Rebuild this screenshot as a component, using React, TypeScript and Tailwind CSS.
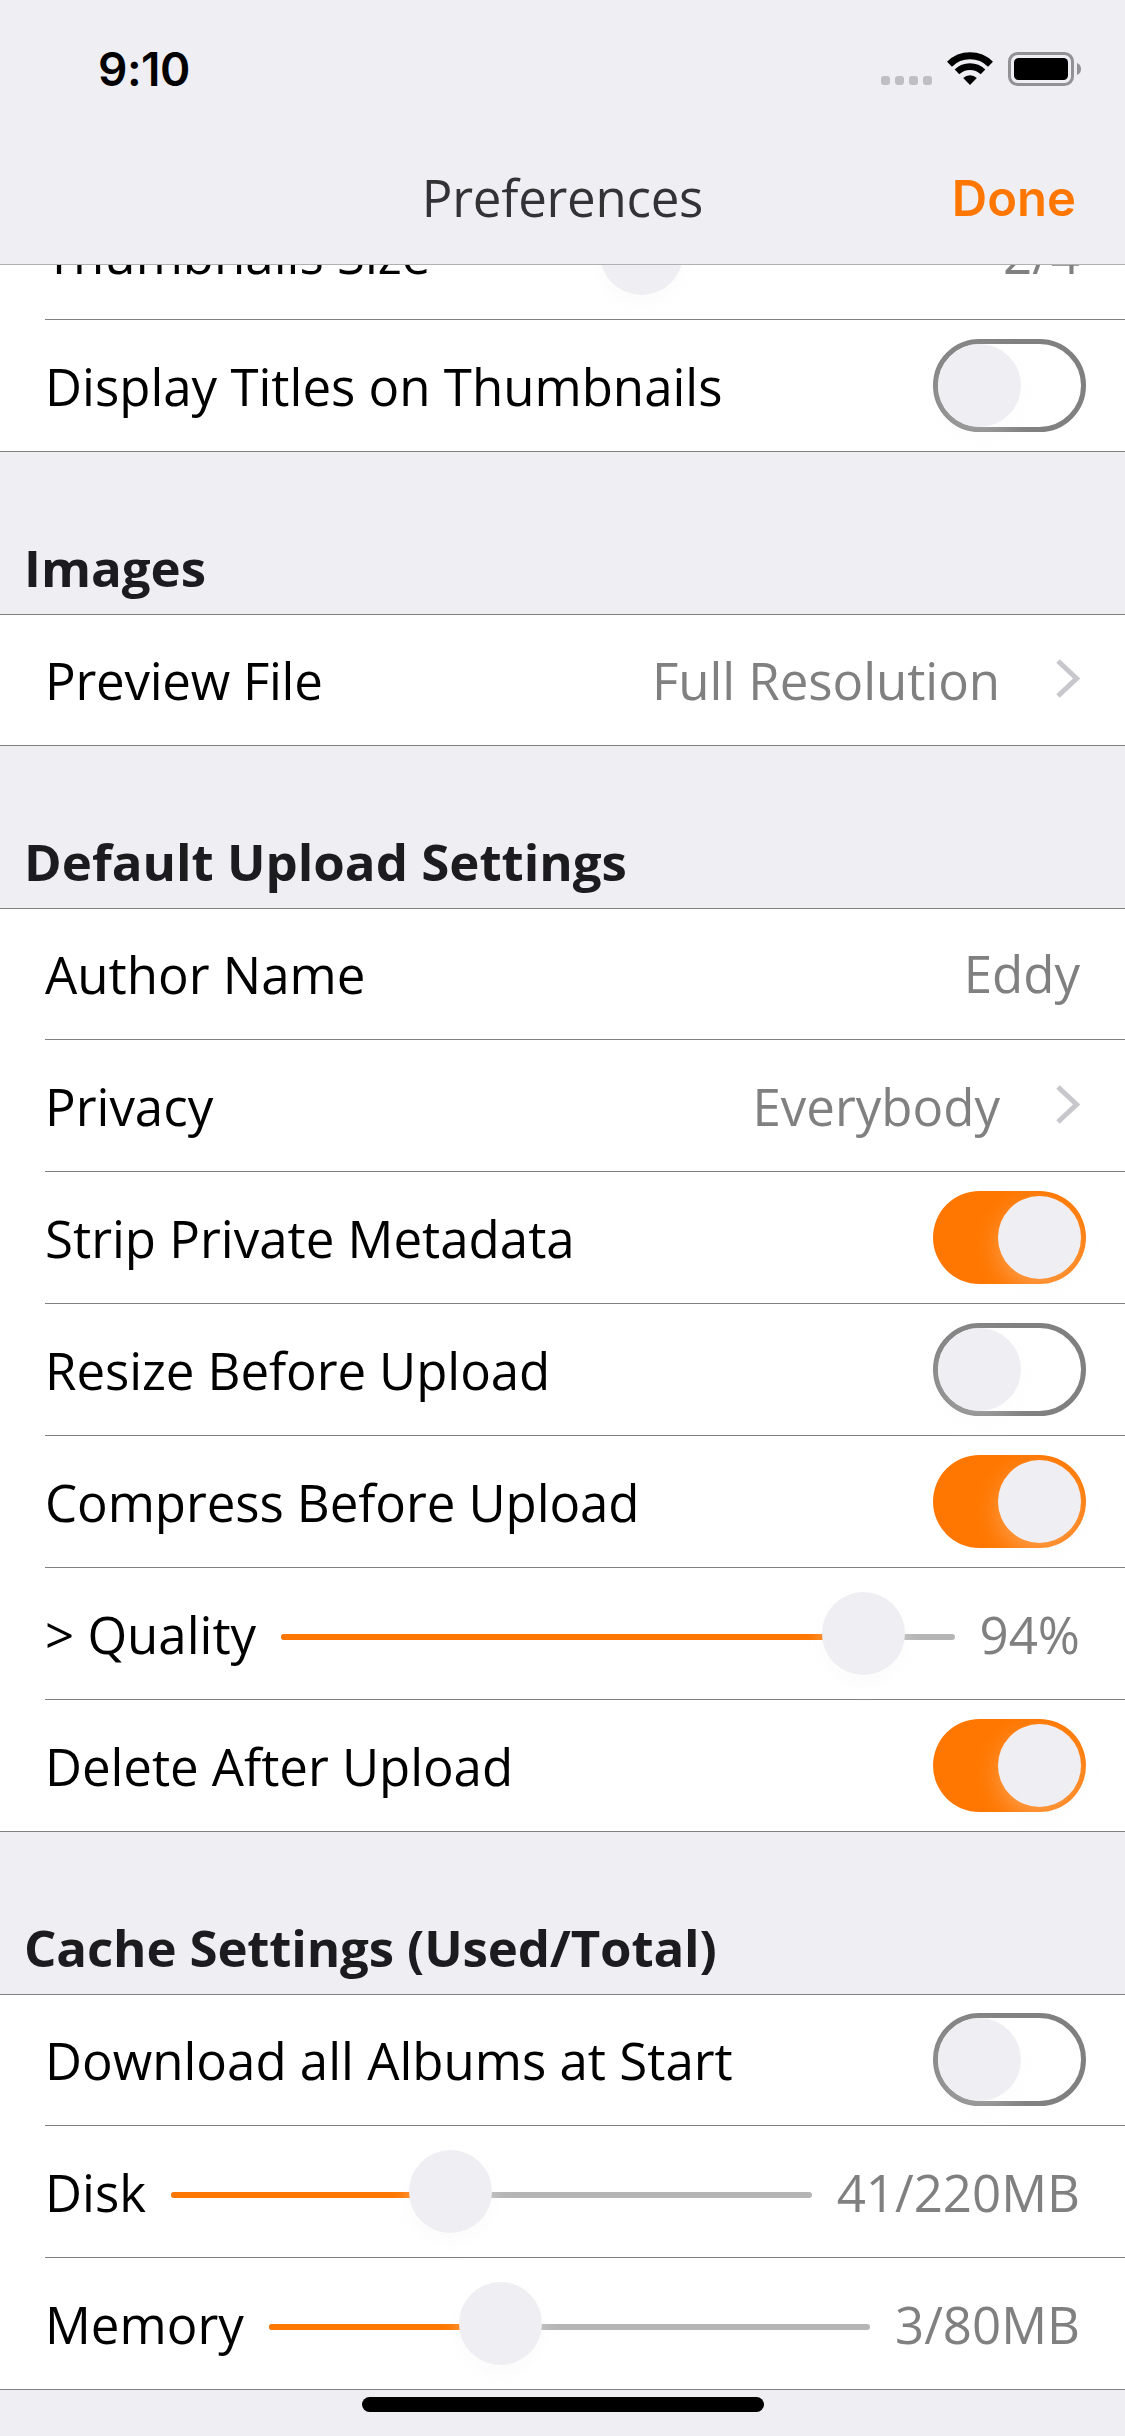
import type { ReactNode } from "react";

function Label({ children, className = "" }: { children: ReactNode; className?: string }) {
  return <span className={`shrink-0 whitespace-pre text-black ${className}`}>{children}</span>;
}

function Value({ children, className = "" }: { children: ReactNode; className?: string }) {
  return <span className={`shrink-0 whitespace-pre text-[#808080] ${className}`}>{children}</span>;
}

function Row({ children, last = false, first = false }: { children: ReactNode; last?: boolean; first?: boolean }) {
  return (
    <div>
      <div
        className={
          first
            ? "flex h-[130px] items-end justify-between px-[45px]"
            : "flex h-[131px] items-end justify-between px-[45px]"
        }
      >
        <div className="flex h-[131px] w-full shrink-0 items-center justify-between">{children}</div>
      </div>
      <div className={last ? "h-px bg-[#808080]" : "ml-[45px] h-px bg-[#808080]"} />
    </div>
  );
}

function Toggle({ on = false }: { on?: boolean }) {
  return (
    <div
      className={
        on
          ? "-mr-[6px] flex h-[93px] w-[153px] shrink-0 items-center justify-end rounded-full bg-[#ff7700] px-[5px]"
          : "-mr-[6px] flex h-[93px] w-[153px] shrink-0 items-center rounded-full border-[5px] border-[#808080]"
      }
    >
      <div className="size-[83px] rounded-full bg-[#efeef3] shadow-[0_9px_24px_rgba(245,245,245,0.32)]" />
    </div>
  );
}

function Slider({ knob }: { knob: number }) {
  return (
    <div className="relative mx-[25px] flex h-[83px] min-w-0 flex-1 items-center">
      <div className="mt-[7px] flex h-[6px] w-full overflow-hidden rounded-full bg-[#b5b5b5]">
        <div className="h-full bg-[#ff7700]" style={{ width: knob + 40 }} />
      </div>
      <div
        className="absolute top-0 size-[83px] rounded-full bg-[#efeef3] shadow-[0_9px_18px_rgba(245,245,245,0.4)]"
        style={{ left: knob }}
      />
    </div>
  );
}

function Chevron() {
  return (
    <svg className="ml-[56px] mt-[-3px] h-[39px] w-[24px]" viewBox="0 0 24 39" fill="none">
      <path d="M2 2 L20.5 19.5 L2 37" stroke="#c7c7cc" strokeWidth="5" />
    </svg>
  );
}

function Section({ title, className = "", children }: { title: string; className?: string; children: ReactNode }) {
  return (
    <section>
      <div className="flex h-[162px] flex-col justify-end">
        <h2 className={`pb-[12px] pl-[24px] text-[51px] leading-[70px] font-bold text-[#1c1c1e] ${className}`}>
          {title}
        </h2>
      </div>
      <div className="h-px bg-[#808080]" />
      <div className="bg-white">{children}</div>
    </section>
  );
}

export default function App() {
  return (
    <div className="relative h-[2436px] w-[1125px] overflow-hidden bg-[#efeef3] font-['Open_Sans',sans-serif] text-[51px] leading-[70px]">
      <header className="flex h-[265px] flex-col border-b border-[#b0b0b0] bg-[#efeef3]">
        <div className="flex h-[132px] items-start justify-between pl-[98px] pr-[44px]">
          <div className="mt-[41px] font-['Inter',sans-serif] text-[46px] leading-[56px] font-semibold tracking-[-0.5px] text-black">
            9:10
          </div>
          <svg className="mt-[50px] h-[40px] w-[202px]" viewBox="879 50 202 40">
            <g fill="#bfbfc2">
              <rect x="881" y="76" width="9" height="9" rx="3" />
              <rect x="895" y="76" width="9" height="9" rx="3" />
              <rect x="909" y="76" width="9" height="9" rx="3" />
              <rect x="923" y="76" width="9" height="9" rx="3" />
            </g>
            <g fill="none" stroke="#000">
              <path d="M949.5 64.2 a29.3 29.3 0 0 1 41 0" strokeWidth="7" />
              <path d="M957 71.9 a18.6 18.6 0 0 1 26 0" strokeWidth="6.6" />
            </g>
            <path d="M970 85 L963.2 78 a9.8 9.8 0 0 1 13.6 0 Z" />
            <rect x="1009.5" y="53.5" width="63" height="31" rx="8" fill="none" stroke="#929295" strokeWidth="3" />
            <rect x="1014" y="58" width="54" height="22" rx="4.5" />
            <path d="M1077 63 a6.5 6.5 0 0 1 0 12 Z" fill="#929295" />
          </svg>
        </div>
        <div className="grid h-[132px] grid-cols-3 items-center px-[49px]">
          <span />
          <h1 className="-mt-[3px] text-center tracking-[-0.25px] text-[#333335]">Preferences</h1>
          <button className="mt-[2px] text-right font-['Inter',sans-serif] text-[49px] font-semibold text-[#ff7700]">
            Done
          </button>
        </div>
      </header>

      <main className="h-[2171px] overflow-hidden">
        <div className="-mt-[77px] bg-white">
          <Row>
            <Label>Thumbnails Size</Label>
            <Slider knob={145} />
            <Value>2/4</Value>
          </Row>
          <Row last>
            <Label>Display Titles on Thumbnails</Label>
            <Toggle />
          </Row>
        </div>

        <Section title="Images">
          <Row first last>
            <Label className="tracking-[-0.25px]">Preview File</Label>
            <div className="flex items-center">
              <Value className="tracking-[-0.05px]">Full Resolution</Value>
              <Chevron />
            </div>
          </Row>
        </Section>

        <Section title="Default Upload Settings">
          <Row first>
            <Label>Author Name</Label>
            <Value className="-mt-[2px]">Eddy</Value>
          </Row>
          <Row>
            <Label>Privacy</Label>
            <div className="flex items-center">
              <Value>Everybody</Value>
              <Chevron />
            </div>
          </Row>
          <Row>
            <Label>Strip Private Metadata</Label>
            <Toggle on />
          </Row>
          <Row>
            <Label className="tracking-[-0.08px]">Resize Before Upload</Label>
            <Toggle />
          </Row>
          <Row>
            <Label className="tracking-[-0.08px]">Compress Before Upload</Label>
            <Toggle on />
          </Row>
          <Row>
            <Label>{"> Quality"}</Label>
            <Slider knob={541} />
            <Value>94%</Value>
          </Row>
          <Row last>
            <Label className="tracking-[-0.05px]">Delete After Upload</Label>
            <Toggle on />
          </Row>
        </Section>

        <Section title="Cache Settings (Used/Total)" className="tracking-[-0.16px]">
          <Row first>
            <Label>Download all Albums at Start</Label>
            <Toggle />
          </Row>
          <Row>
            <Label>Disk</Label>
            <Slider knob={238} />
            <Value>41/220MB</Value>
          </Row>
          <Row last>
            <Label>Memory</Label>
            <Slider knob={190} />
            <Value>3/80MB</Value>
          </Row>
        </Section>
      </main>

      <div className="absolute bottom-[24px] left-[362px] h-[15px] w-[402px] rounded-full bg-black" />
    </div>
  );
}
